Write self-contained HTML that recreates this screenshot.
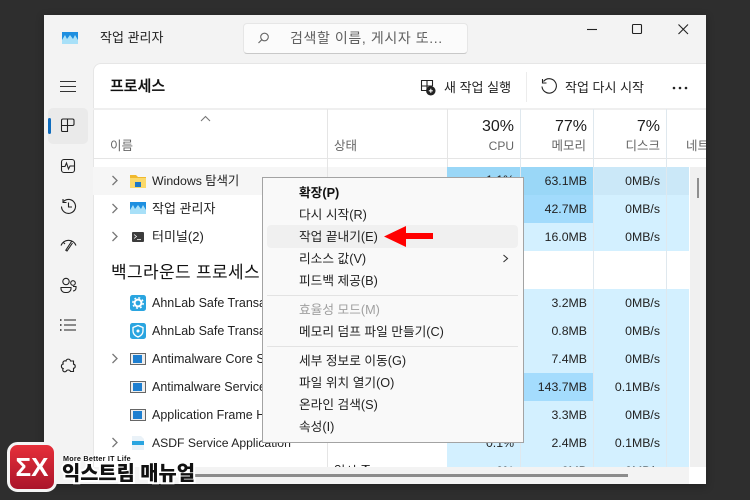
<!DOCTYPE html>
<html lang="ko"><head><meta charset="utf-8">
<style>
html,body{margin:0;padding:0}
body{width:750px;height:500px;overflow:hidden;background:#2e2e2e;position:relative;font-family:"Liberation Sans","Noto Sans CJK KR",sans-serif;color:#1c1c1c}
div,span,svg{position:absolute}
.t{white-space:nowrap;font-size:12.5px;line-height:18px;height:18px}
.r{text-align:right;width:80px}
.v{font-size:12.3px;color:#222}
.n{left:152px;font-size:12.5px;color:#222}
.m{left:299px;font-size:12.7px;color:#222}
.g{color:#666}
svg.i{fill:none;stroke:#333;stroke-width:1.1}
</style></head><body>
<div style="left:44px;top:15px;width:662px;height:469px;background:#f3f3f3;overflow:hidden;box-shadow:0 2px 8px rgba(0,0,0,.3)"></div>

<!-- title bar -->
<svg style="left:62px;top:32px" width="16" height="12"><rect width="16" height="12" fill="#1e8fe0"/><path d="M0 12V8L3 3 5 7 8 3 11 7 13 3 16 8V12Z" fill="#a8e0f8"/></svg>
<div class="t" style="left:100px;top:29px;font-size:13px">작업 관리자</div>
<div style="left:243px;top:23px;width:223px;height:29px;background:#fbfbfb;border:1px solid #e6e6e6;border-bottom-color:#c8c8c8;border-radius:4px"></div>
<svg class="i" style="left:257px;top:32px;stroke:#666" width="13" height="13"><circle cx="7.5" cy="5" r="3.8"/><path d="M4.7 7.8L1.5 11"/></svg>
<div class="t g" style="left:290px;top:29px;font-size:14px;color:#606060;letter-spacing:.6px">검색할 이름, 게시자 또...</div>
<svg class="i" style="left:585px;top:22px;stroke:#222" width="106" height="14"><path d="M2 7.5H12"/><rect x="47.5" y="2.5" width="9" height="9" rx="1"/><path d="M93.500 2.500L103 12M103 2.500L93.500 12"/></svg>

<!-- main panel -->
<div style="left:93px;top:63px;width:613px;height:404px;background:#fff;border-top:1px solid #e6e6e6;border-left:1px solid #e6e6e6;border-top-left-radius:8px;box-sizing:border-box"></div>
<div style="left:93px;top:108px;width:613px;height:2px;background:#efefef"></div>
<div style="left:93px;top:158px;width:613px;height:1px;background:#e5e5e5"></div>

<div class="t" style="left:110px;top:78px;font-size:15px;font-weight:500;color:#111;-webkit-text-stroke:.25px #111">프로세스</div>
<svg class="i" style="left:419px;top:79px;stroke:#222" width="17" height="17"><path d="M8 11.500H2.500V1.500H13.500V7M2.500 7H13.500M8 1.500V11"/><circle cx="11.800" cy="11.800" r="4.200" fill="#222"/><path d="M9.800 11.800H13.800M11.800 9.800V13.800" stroke="#fff"/></svg>
<div class="t" style="left:444px;top:79px;font-size:13px;color:#222">새 작업 실행</div>
<div style="left:526px;top:72px;width:1px;height:30px;background:#ececec"></div>
<svg class="i" style="left:540px;top:78px;stroke:#222" width="18" height="18"><path d="M3.500 3.500A7.200 7.200 0 1 1 2 8.500M2.500 1V5H6.500"/></svg>
<div class="t" style="left:565px;top:79px;font-size:13px;color:#222">작업 다시 시작</div>
<svg style="left:671px;top:86px" width="18" height="4"><circle cx="3" cy="2" r="1.300" fill="#222"/><circle cx="9" cy="2" r="1.300" fill="#222"/><circle cx="15" cy="2" r="1.300" fill="#222"/></svg>

<!-- headers -->
<svg class="i" style="left:200px;top:115px;stroke:#777" width="11" height="7"><path d="M1 6L5.500 1.500 10 6"/></svg>
<div class="t g" style="left:110px;top:137px;font-size:12.5px">이름</div>
<div class="t g" style="left:334px;top:137px;font-size:12.5px">상태</div>
<div class="t r" style="left:434px;top:118px;font-size:16px">30%</div>
<div class="t r g" style="left:434px;top:137px;font-size:12px">CPU</div>
<div class="t r" style="left:507px;top:118px;font-size:16px">77%</div>
<div class="t r g" style="left:506px;top:137px;font-size:12.5px">메모리</div>
<div class="t r" style="left:580px;top:118px;font-size:16px">7%</div>
<div class="t r g" style="left:580px;top:137px;font-size:12.5px">디스크</div>
<div style="left:686px;top:130px;width:20px;height:28px;overflow:hidden"><div class="t g" style="left:0;top:7px;font-size:12.5px">네트워크</div></div>

<!-- scrollbar column -->
<div style="left:690px;top:167px;width:16px;height:300px;background:#f0f0f0"></div>

<!-- rows -->
<div style="left:93px;top:167px;width:354px;height:28px;background:#f6f6f6"></div>
<div style="left:447px;top:167px;width:146px;height:28px;background:#9ad7f7"></div>
<div style="left:593px;top:167px;width:96px;height:28px;background:#cbe8f8"></div>
<div style="left:447px;top:195px;width:146px;height:28px;background:#a2dbfc"></div>
<div style="left:593px;top:195px;width:96px;height:28px;background:#d3f0ff"></div>
<div style="left:447px;top:223px;width:242px;height:28px;background:#d3f0ff"></div>
<div style="left:447px;top:289px;width:242px;height:178px;background:#d3f0ff"></div>
<div style="left:447px;top:373px;width:146px;height:28px;background:#a4dcfd"></div>

<!-- column lines -->
<div style="left:327px;top:109px;width:1px;height:358px;background:#e5e5e5"></div>
<div style="left:447px;top:109px;width:1px;height:58px;background:#e5e5e5"></div>
<div style="left:520px;top:109px;width:1px;height:358px;background:#dfe8ee"></div>
<div style="left:593px;top:109px;width:1px;height:358px;background:#dfe8ee"></div>
<div style="left:666px;top:109px;width:1px;height:358px;background:#dfe8ee"></div>

<!-- chevrons -->
<svg class="i" style="left:110px;top:174px;stroke:#777;stroke-width:1.300" width="10" height="200"><path d="M2.500 2L7 6.500 2.500 11M2.500 30L7 34.500 2.500 39M2.500 58L7 62.500 2.500 67M2.500 180L7 184.500 2.500 189"/></svg>
<svg class="i" style="left:110px;top:436px;stroke:#777;stroke-width:1.300" width="10" height="14"><path d="M2.500 2L7 6.500 2.500 11"/></svg>

<!-- app icons -->
<svg style="left:130px;top:173px" width="16" height="16"><path d="M0 2H6L8 4H16V15H0Z" fill="#f0b92e"/><rect y="5" width="16" height="10" fill="#fbd96a"/><rect x="5" y="9" width="6" height="5" fill="#1e78c8"/></svg>
<svg style="left:130px;top:202px" width="16" height="12"><rect width="16" height="12" fill="#1e8fe0"/><path d="M0 12V8L3 3 5 7 8 3 11 7 13 3 16 8V12Z" fill="#a8e0f8"/></svg>
<svg style="left:132px;top:232px" width="12" height="10"><rect width="12" height="10" rx="1" fill="#3c3c3c"/><path d="M2 2.500L4.500 4.500 2 6.500M5 7.500H9" stroke="#fff" stroke-width=".8" fill="none"/></svg>
<svg style="left:130px;top:295px" width="16" height="16"><rect width="16" height="16" rx="2.500" fill="#2aa5e0"/><circle cx="8" cy="8" r="3.400" fill="none" stroke="#fff" stroke-width="2"/><circle cx="8" cy="8" r="5.200" fill="none" stroke="#fff" stroke-width="1.400" stroke-dasharray="2 2.100"/></svg>
<svg style="left:130px;top:323px" width="16" height="16"><rect width="16" height="16" rx="2.500" fill="#2aa5e0"/><path d="M8 2.500L13 4.500V8C13 11 10.500 13 8 14 5.500 13 3 11 3 8V4.500Z" fill="none" stroke="#fff" stroke-width="1.300"/><circle cx="8" cy="8" r="1.500" fill="#fff"/></svg>
<svg style="left:130px;top:353px" width="16" height="12"><rect x=".5" y=".5" width="15" height="11" fill="#eee" stroke="#666"/><rect x="3" y="2" width="9" height="8" fill="#1e7fd0"/></svg>
<svg style="left:130px;top:381px" width="16" height="12"><rect x=".5" y=".5" width="15" height="11" fill="#eee" stroke="#666"/><rect x="3" y="2" width="9" height="8" fill="#1e7fd0"/></svg>
<svg style="left:130px;top:409px" width="16" height="12"><rect x=".5" y=".5" width="15" height="11" fill="#eee" stroke="#666"/><rect x="3" y="2" width="9" height="8" fill="#1e7fd0"/></svg>
<svg style="left:132px;top:436px" width="12" height="14"><path d="M0 0H9L12 3V14H0Z" fill="#eaf2f8"/><rect y="5" width="12" height="4" fill="#2aa5e0"/></svg>

<!-- row text -->
<div class="t n" style="top:172px;font-size:12.3px">Windows 탐색기</div>
<div class="t n" style="top:200px;font-size:13px">작업 관리자</div>
<div class="t n" style="top:228px;font-size:13px">터미널(2)</div>
<div class="t" style="left:111px;top:264px;font-size:17px;letter-spacing:.35px;color:#111">백그라운드 프로세스</div>
<div class="t n" style="top:294px">AhnLab Safe Transaction</div>
<div class="t n" style="top:322px">AhnLab Safe Transaction</div>
<div class="t n" style="top:350px;font-size:12.7px">Antimalware Core Service</div>
<div class="t n" style="top:378px">Antimalware Service Exe</div>
<div class="t n" style="top:406px">Application Frame Host</div>
<div class="t n" style="top:434px;font-size:12.2px">ASDF Service Application</div>

<!-- values -->
<div class="t r v" style="left:434px;top:171px">1.1%</div>
<div class="t r v" style="left:507px;top:172px">63.1MB</div><div class="t r v" style="left:580px;top:172px">0MB/s</div>
<div class="t r v" style="left:507px;top:200px">42.7MB</div><div class="t r v" style="left:580px;top:200px">0MB/s</div>
<div class="t r v" style="left:507px;top:228px">16.0MB</div><div class="t r v" style="left:580px;top:228px">0MB/s</div>
<div class="t r v" style="left:507px;top:294px">3.2MB</div><div class="t r v" style="left:580px;top:294px">0MB/s</div>
<div class="t r v" style="left:507px;top:322px">0.8MB</div><div class="t r v" style="left:580px;top:322px">0MB/s</div>
<div class="t r v" style="left:507px;top:350px">7.4MB</div><div class="t r v" style="left:580px;top:350px">0MB/s</div>
<div class="t r v" style="left:507px;top:378px">143.7MB</div><div class="t r v" style="left:580px;top:378px">0.1MB/s</div>
<div class="t r v" style="left:507px;top:406px">3.3MB</div><div class="t r v" style="left:580px;top:406px">0MB/s</div>
<div class="t r v" style="left:434px;top:434px">0.1%</div>
<div class="t r v" style="left:507px;top:434px">2.4MB</div><div class="t r v" style="left:580px;top:434px">0.1MB/s</div>
<div class="t v" style="left:334px;top:462px">일시 중</div>
<div class="t r v" style="left:434px;top:462px">0%</div>
<div class="t r v" style="left:507px;top:462px">0MB</div>
<div class="t r v" style="left:580px;top:462px">0MB/s</div>

<!-- bottom + scrollbars -->
<div style="left:93px;top:467px;width:596px;height:17px;background:#f3f3f3"></div>
<div style="left:689px;top:467px;width:17px;height:17px;background:#fff"></div>
<div style="left:697px;top:178px;width:2px;height:20px;background:#8f8f8f"></div>
<div style="left:190px;top:474px;width:438px;height:3px;background:#8c8c8c"></div>

<!-- sidebar -->
<svg class="i" style="left:60px;top:80px;stroke:#333" width="16" height="13"><path d="M0 1.500H16M0 6.500H16M0 11.500H16"/></svg>
<div style="left:48px;top:108px;width:40px;height:36px;background:#eaeaea;border-radius:5px"></div>
<div style="left:48px;top:118px;width:3px;height:16px;background:#0f6cbd;border-radius:2px"></div>
<svg class="i" style="left:60px;top:118px;stroke:#222" width="16" height="16"><path d="M1.500 7.500V2.500Q1.500 1 3 1H12.500Q14 1 14 2.500V6Q14 7.500 12.500 7.500H7.500V13.500H2.800Q1.500 13.500 1.500 12.200ZM1.500 7.500H7.500M7.500 1V7.500"/></svg>
<svg class="i" style="left:60px;top:158px;stroke:#222" width="16" height="16"><rect x="1.500" y="1.500" width="13" height="13" rx="2.500"/><path d="M1.500 8.500H5L6.500 5 8.500 11 10 8H14.500"/></svg>
<svg class="i" style="left:60px;top:198px;stroke:#222" width="17" height="17"><path d="M3.500 3.500A7 7 0 1 1 1.500 8.500M3 1V4.500H6.500M8.500 4.500V9H12"/></svg>
<svg class="i" style="left:60px;top:238px;stroke:#222" width="17" height="14"><path d="M1 7.500A8 8 0 0 1 16 7.500M3.500 4.500L5 6M12.500 5L7 13 5.800 12.200 11.500 3.500"/></svg>
<svg class="i" style="left:60px;top:277px;stroke:#222" width="17" height="17"><circle cx="6" cy="4.500" r="3.200"/><circle cx="13" cy="6" r="2.300"/><path d="M1 10.500H11V12A4 4 0 0 1 7 15.500H5A4 4 0 0 1 1 12ZM13 9.500H16V11A3 3 0 0 1 13 14"/></svg>
<svg class="i" style="left:60px;top:318px;stroke:#222" width="16" height="14"><path d="M4 2H16M4 7H16M4 12H16"/><path d="M0 2H1.500M0 7H1.500M0 12H1.500" stroke-width="1.500"/></svg>
<svg class="i" style="left:60px;top:358px;stroke:#222" width="17" height="16"><path d="M6 3C6.500 .5 10 .5 10.500 3H13.500V6.200C15.800 6.500 15.800 10 13.500 10.300V13.500H10.500C10 11.500 6.500 11.500 6 13.500C3.500 14.500 2 12.500 3.200 10.500C.8 10 .8 6.500 3.200 6C2.200 4 4 2.200 6 3Z"/></svg>

<!-- context menu -->
<div style="left:262px;top:177px;width:260px;height:264px;background:#f9f9f9;border:1px solid #a3a3a3"></div>
<div style="left:267px;top:225px;width:251px;height:23px;background:#f0f0f0;border-radius:4px"></div>
<div style="left:267px;top:295px;width:251px;height:1px;background:#e3e3e3"></div>
<div style="left:267px;top:346px;width:251px;height:1px;background:#e3e3e3"></div>
<div class="t m" style="top:184px;font-weight:700;color:#111">확장(P)</div>
<div class="t m" style="top:206px">다시 시작(R)</div>
<div class="t m" style="top:228px">작업 끝내기(E)</div>
<div class="t m" style="top:250px">리소스 값(V)</div>
<div class="t m" style="top:272px">피드백 제공(B)</div>
<div class="t m" style="top:301px;color:#a0a0a0">효율성 모드(M)</div>
<div class="t m" style="top:323px">메모리 덤프 파일 만들기(C)</div>
<div class="t m" style="top:352px">세부 정보로 이동(G)</div>
<div class="t m" style="top:374px">파일 위치 열기(O)</div>
<div class="t m" style="top:396px">온라인 검색(S)</div>
<div class="t m" style="top:418px">속성(I)</div>
<svg class="i" style="left:502px;top:254px;stroke:#333" width="7" height="10"><path d="M1.500 1L5.500 4.500 1.500 8"/></svg>
<svg style="left:384px;top:225px" width="50" height="23"><path d="M0 11.500L22 1V8H49V14H22V22Z" fill="#f00"/></svg>

<!-- logo -->
<svg style="left:6px;top:441px" width="52" height="52"><defs><linearGradient id="lg" x1="0" y1="0" x2="0" y2="1"><stop offset="0" stop-color="#e8303a"/><stop offset="1" stop-color="#a8142a"/></linearGradient></defs><rect x="2.500" y="2.500" width="47" height="47" rx="9" fill="url(#lg)" stroke="#f4f4f4" stroke-width="3"/><text x="26" y="35" text-anchor="middle" font-family="Liberation Sans" font-weight="700" font-size="26" fill="#fff">ΣX</text></svg>
<div class="t" style="left:62px;top:461px;font-size:19.800px;line-height:26px;height:26px;font-weight:900;color:#111;-webkit-text-stroke:4px #fff;paint-order:stroke fill">익스트림 매뉴얼</div>
<div class="t" style="left:63px;top:453px;font-size:7.200px;line-height:11px;height:11px;font-weight:700;color:#111;letter-spacing:.25px;text-shadow:0 0 2px #fff,0 0 2px #fff,0 0 3px #fff">More Better IT Life</div>
</body></html>
